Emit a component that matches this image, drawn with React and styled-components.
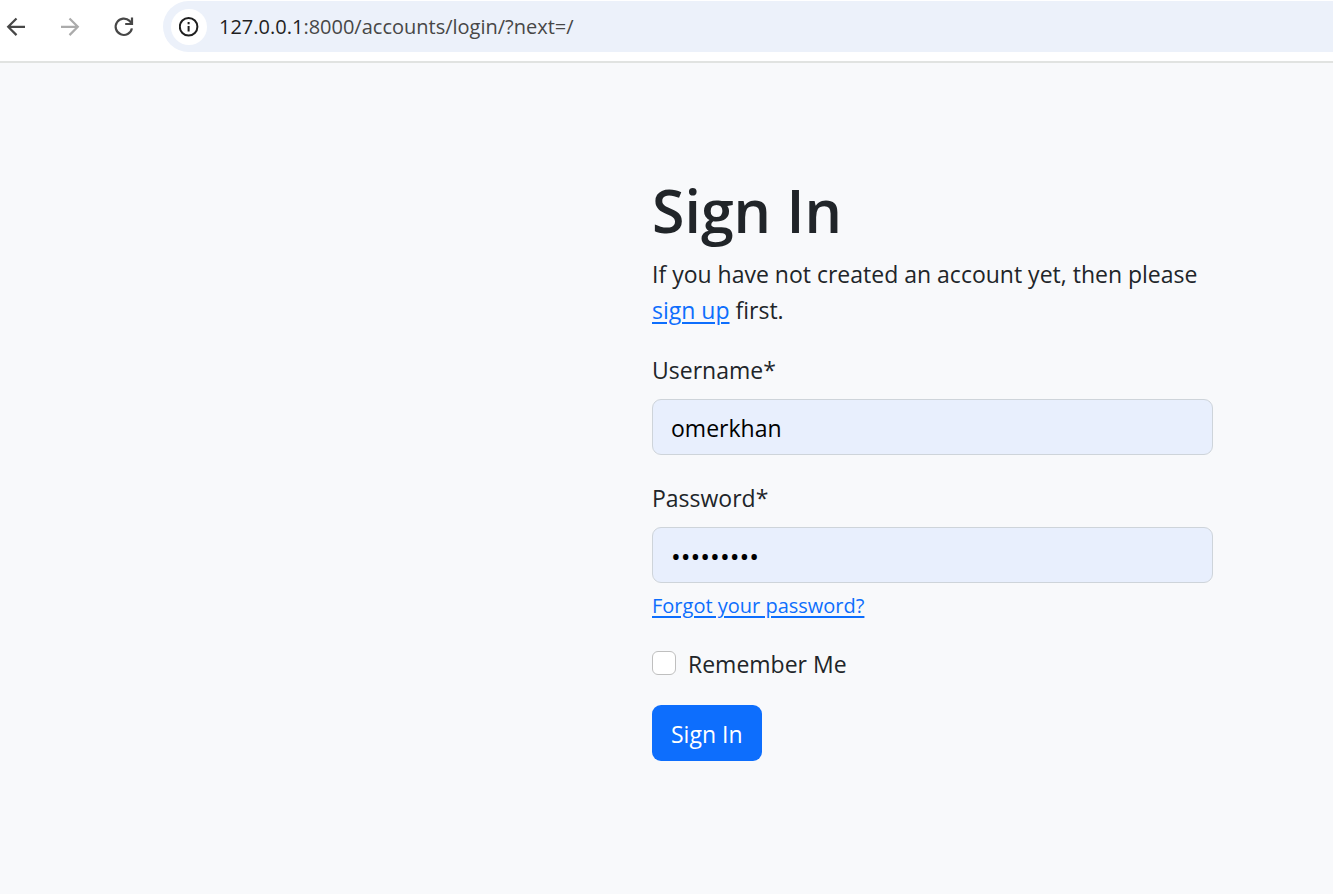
import React from "react";
import styled, { createGlobalStyle } from "styled-components";

const GlobalStyle = createGlobalStyle`
  *, *::before, *::after { box-sizing: border-box; }
  body {
    margin: 0;
    background: #f8f9fb;
    color: #212529;
    font-family: "Open Sans", "Noto Sans", sans-serif;
    font-size: 23px;
    line-height: 36px;
  }
`;

const Toolbar = styled.header`
  display: flex;
  align-items: center;
  padding: 1px 0 9px 3px;
  background: #fff;
  border-bottom: 2px solid #e1e3e1;
`;

const NavButtons = styled.nav`
  display: flex;
  gap: 28px;
  margin-right: 26px;
`;

const NavButton = styled.button`
  display: flex;
  padding: 0;
  border: 0;
  background: none;
  color: #474747;

  &:disabled { color: #ababab; }
`;

const AddressBar = styled.div`
  flex: 1;
  display: flex;
  align-items: center;
  gap: 12px;
  height: 51px;
  padding-left: 8px;
  background: #ecf1fa;
  border-radius: 26px 0 0 26px;
  color: #474747;
  font-size: 20px;
  line-height: 28px;
`;

const SiteInfoButton = styled.button`
  display: grid;
  place-items: center;
  width: 36px;
  height: 36px;
  padding: 0;
  border: 0;
  border-radius: 50%;
  background: #fff;
  color: #1f1f1f;
`;

const Host = styled.span`
  color: #1f1f1f;
`;

const Page = styled.main`
  display: grid;
  grid-template-columns: 652fr 561fr 120fr;
  padding: 111px 0;
`;

const Form = styled.form`
  grid-column: 2;
  display: flex;
  flex-direction: column;
  align-items: flex-start;
`;

const Title = styled.h1`
  margin: 0 0 10px;
  font-size: 59px;
  font-weight: 600;
  line-height: 72px;
`;

const Intro = styled.p`
  margin: 0 0 23px;
`;

const Link = styled.a`
  color: #0d6efd;
  text-decoration: underline;
  text-decoration-thickness: 2px;
  text-underline-offset: 3px;
`;

const Field = styled.div`
  width: 100%;
  margin-bottom: 24px;
`;

const Label = styled.label`
  display: block;
  margin-bottom: 10px;
  line-height: 38px;
`;

const Input = styled.input`
  display: block;
  width: 100%;
  height: 56px;
  padding: 10px 18px 8px;
  border: 1px solid #ced4da;
  border-radius: 9px;
  outline: 0;
  background: #e8effd;
  color: #000;
  font: inherit;

  &[type="password"] { font-size: 26px; }
`;

const Hint = styled.div`
  margin-top: 7px;
  font-size: 20px;
  line-height: 31px;
`;

const CheckRow = styled.div`
  display: flex;
  align-items: center;
  gap: 12px;
  height: 36px;
  margin-bottom: 24px;
`;

const CheckLabel = styled.label`
  padding-top: 2px;
`;

const Checkbox = styled.input`
  appearance: none;
  width: 24px;
  height: 24px;
  margin: 0;
  border: 1px solid #bfbfbf;
  border-radius: 6px;
  background: #fff;

  &:checked { background: #0d6efd; }
`;

const SubmitButton = styled.button`
  height: 56px;
  padding: 2px 19px 0;
  border: 0;
  border-radius: 9px;
  background: #0d6efd;
  color: #fff;
  font: inherit;
`;

function Icon({ children }) {
  return (
    <svg width="26" height="26" viewBox="0 0 26 26" fill="none" stroke="currentColor" strokeWidth="2.2" aria-hidden="true">
      {children}
    </svg>
  );
}

export default function App() {
  return (
    <>
      <GlobalStyle />
      <Toolbar>
        <NavButtons aria-label="Browser">
          <NavButton type="button" aria-label="Back">
            <Icon><path d="M22 12.8H5.5M13.5 4.5 5.2 12.8l8.3 8.3" /></Icon>
          </NavButton>
          <NavButton type="button" aria-label="Forward" disabled>
            <Icon><path d="M4 12.8h16.5M12.5 4.5l8.3 8.3-8.3 8.3" /></Icon>
          </NavButton>
          <NavButton type="button" aria-label="Reload">
            <Icon>
              <path d="M20.9 14.4A8.2 8.2 0 1 1 18.6 6.9l2.4 2.6" />
              <path d="M21 3.6v7.4M22 10h-7.8" />
            </Icon>
          </NavButton>
        </NavButtons>
        <AddressBar>
          <SiteInfoButton type="button" aria-label="Site information">
            <svg width="20" height="20" viewBox="0 0 20 20" fill="none" stroke="currentColor" strokeWidth="2" aria-hidden="true">
              <circle cx="9.6" cy="9.8" r="8.8" />
              <path d="M9.6 9v5.6M9.6 5v2.2" />
            </svg>
          </SiteInfoButton>
          <span><Host>127.0.0.1</Host>:8000/accounts/login/?next=/</span>
        </AddressBar>
      </Toolbar>
      <Page>
        <Form onSubmit={(event) => event.preventDefault()}>
          <Title>Sign In</Title>
          <Intro>
            If you have not created an account yet, then please{" "}
            <Link href="#signup">sign up</Link> first.
          </Intro>
          <Field>
            <Label htmlFor="username">Username*</Label>
            <Input id="username" type="text" defaultValue="omerkhan" />
          </Field>
          <Field>
            <Label htmlFor="password">Password*</Label>
            <Input id="password" type="password" defaultValue="omerkhan1" />
            <Hint><Link href="#reset">Forgot your password?</Link></Hint>
          </Field>
          <CheckRow>
            <Checkbox id="remember" type="checkbox" />
            <CheckLabel htmlFor="remember">Remember Me</CheckLabel>
          </CheckRow>
          <SubmitButton type="submit">Sign In</SubmitButton>
        </Form>
      </Page>
    </>
  );
}
